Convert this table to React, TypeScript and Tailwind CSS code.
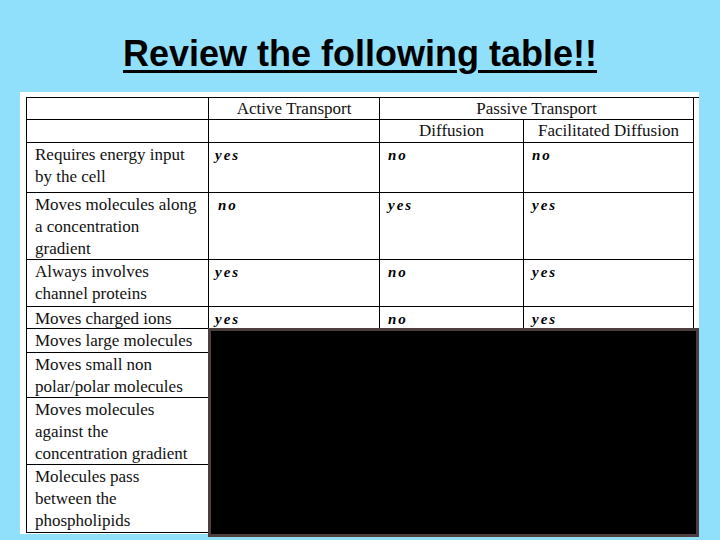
const rows = [
  { label: ["Requires energy input", "by the cell"], a: "yes", d: "no", f: "no", h: "h-[50px]" },
  { label: ["Moves molecules along", "a concentration", "gradient"], a: "no", d: "yes", f: "yes", h: "h-[67px]", indent: true },
  { label: ["Always involves", "channel proteins"], a: "yes", d: "no", f: "yes", h: "h-[47px]" },
  { label: ["Moves charged ions"], a: "yes", d: "no", f: "yes", h: "h-[22px]" },
  { label: ["Moves large molecules"], a: "", d: "", f: "", h: "h-[24px]" },
  { label: ["Moves small non", "polar/polar molecules"], a: "", d: "", f: "", h: "h-[45px]" },
  { label: ["Moves molecules", "against the", "concentration gradient"], a: "", d: "", f: "", h: "h-[67px]" },
  { label: ["Molecules pass", "between the", "phospholipids"], a: "", d: "", f: "", h: "h-[68px]" },
];

function Answer({ text, indent }: { text: string; indent?: boolean }) {
  return (
    <span
      className={`font-bold italic text-[15px] tracking-[2px] text-black ${indent ? "pl-[3px]" : ""}`}
      style={{ fontFamily: '"Liberation Serif", serif' }}
    >
      {text}
    </span>
  );
}

export default function App() {
  const cell = "border-r border-b border-black px-2";
  return (
    <div className="relative w-[720px] h-[540px] bg-[#90e0fc] overflow-hidden">
      <div className="h-[92px] flex justify-center items-start pt-[34px]">
        <h1
          className="text-[36px] leading-[40px] font-bold underline decoration-[3px] underline-offset-[4px] text-black"
          style={{ fontFamily: '"Liberation Sans", Arial, sans-serif' }}
        >
          Review the following table!!
        </h1>
      </div>

      <div className="ml-[20px] w-[679px] h-[442px] bg-white pl-[6px] pt-[5px]">
        <div
          className="grid grid-cols-[182px_171px_144px_170px] border-t border-l border-black text-[17px] leading-[22px] text-[#111]"
          style={{ fontFamily: '"Liberation Serif", "Times New Roman", serif' }}
        >
          <div className={`${cell} h-[22px]`} />
          <div className={`${cell} h-[22px] text-center`}>Active Transport</div>
          <div className={`${cell} h-[22px] col-span-2 text-center`}>Passive Transport</div>

          <div className={`${cell} h-[23px]`} />
          <div className={`${cell} h-[23px]`} />
          <div className={`${cell} h-[23px] text-center`}>Diffusion</div>
          <div className={`${cell} h-[23px] text-center`}>Facilitated Diffusion</div>

          {rows.map((r, i) => (
            <div key={i} className="contents">
              <div className={`${cell} ${r.h} pt-[1px] overflow-hidden`}>
                {r.label.map((l, j) => (
                  <div key={j}>{l}</div>
                ))}
              </div>
              <div className={`${cell} ${r.h} pt-[1px] pl-[6px]`}>
                <Answer text={r.a} indent={r.indent} />
              </div>
              <div className={`${cell} ${r.h} pt-[1px]`}>
                <Answer text={r.d} />
              </div>
              <div className={`${cell} ${r.h} pt-[1px]`}>
                <Answer text={r.f} />
              </div>
            </div>
          ))}
        </div>
      </div>

      <div className="absolute left-[208px] top-[328px] w-[491px] h-[209px] bg-black border-[3px] border-[#4e3f3f]" />
    </div>
  );
}
